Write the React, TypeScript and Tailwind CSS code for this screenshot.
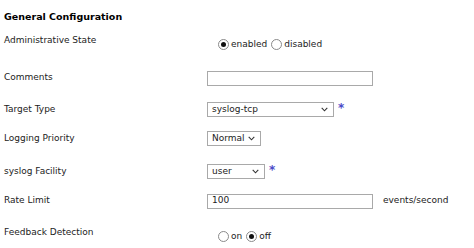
import React from "react";

const font = { fontFamily: '"DejaVu Sans", Verdana, sans-serif' };

function Radio({ checked }: { checked?: boolean }) {
  return (
    <span className="inline-flex h-[11px] w-[11px] items-center justify-center rounded-full border border-[#8a8a8a] bg-white">
      {checked && <span className="h-[5px] w-[5px] rounded-full bg-[#111]" />}
    </span>
  );
}

function Select({ value, width }: { value: string; width: string }) {
  return (
    <div
      className={`flex h-[15px] items-center justify-between border border-[#a9a9a9] bg-white pl-[4px] pr-[5px] text-[9px] text-[#222] ${width}`}
    >
      <span>{value}</span>
      <svg width="7" height="5" viewBox="0 0 7 5" className="shrink-0">
        <path d="M0.7 0.8 L3.5 3.8 L6.3 0.8" fill="none" stroke="#333" strokeWidth="1.1" />
      </svg>
    </div>
  );
}

function Req() {
  return <span className="ml-[4px] -mt-[4px] text-[12px] font-bold leading-none text-[#4b4bc8]">*</span>;
}

export default function App() {
  return (
    <div className="h-[248px] w-[474px] overflow-hidden bg-white pt-[5px] text-[#222]" style={font}>
      <div className="flex h-[24px] items-center pl-[4px] text-[9.5px] font-bold text-black">
        General Configuration
      </div>

      {/* Administrative State */}
      <div className="flex h-[31px] text-[9px]">
        <div className="mt-[5px] w-[207px] pl-[4px] leading-[12px]">Administrative State</div>
        <div className="flex items-center gap-[2px] pl-[11px]">
          <Radio checked />
          <span className="mr-[2px]">enabled</span>
          <Radio />
          <span>disabled</span>
        </div>
      </div>

      {/* Comments */}
      <div className="flex h-[36px] items-center text-[9px]">
        <div className="w-[207px] pl-[4px]">Comments</div>
        <div className="h-[15px] w-[166px] border border-[#a9a9a9] bg-white" />
      </div>

      {/* Target Type */}
      <div className="flex h-[27px] items-center text-[9px]">
        <div className="w-[207px] pl-[4px]">Target Type</div>
        <Select value="syslog-tcp" width="w-[127px]" />
        <Req />
      </div>

      {/* Logging Priority */}
      <div className="flex h-[31px] items-center text-[9px]">
        <div className="w-[207px] pl-[4px]">Logging Priority</div>
        <Select value="Normal" width="w-[54px]" />
      </div>

      {/* syslog Facility */}
      <div className="flex h-[35px] items-center text-[9px]">
        <div className="w-[207px] pl-[4px]">syslog Facility</div>
        <Select value="user" width="w-[58px]" />
        <Req />
      </div>

      {/* Rate Limit */}
      <div className="flex h-[24px] items-center text-[9px]">
        <div className="w-[207px] pl-[4px]">Rate Limit</div>
        <div className="flex h-[15px] w-[166px] items-center border border-[#a9a9a9] bg-white pl-[4px]">100</div>
        <span className="ml-[10px]">events/second</span>
      </div>

      {/* Feedback Detection */}
      <div className="flex h-[35px] items-start text-[9px]">
        <div className="mt-[13px] w-[207px] pl-[4px] leading-[12px]">Feedback Detection</div>
        <div className="mt-[17px] flex items-center gap-[2px] pl-[11px] leading-[12px]">
          <Radio />
          <span className="mr-[2px]">on</span>
          <Radio checked />
          <span>off</span>
        </div>
      </div>
    </div>
  );
}
